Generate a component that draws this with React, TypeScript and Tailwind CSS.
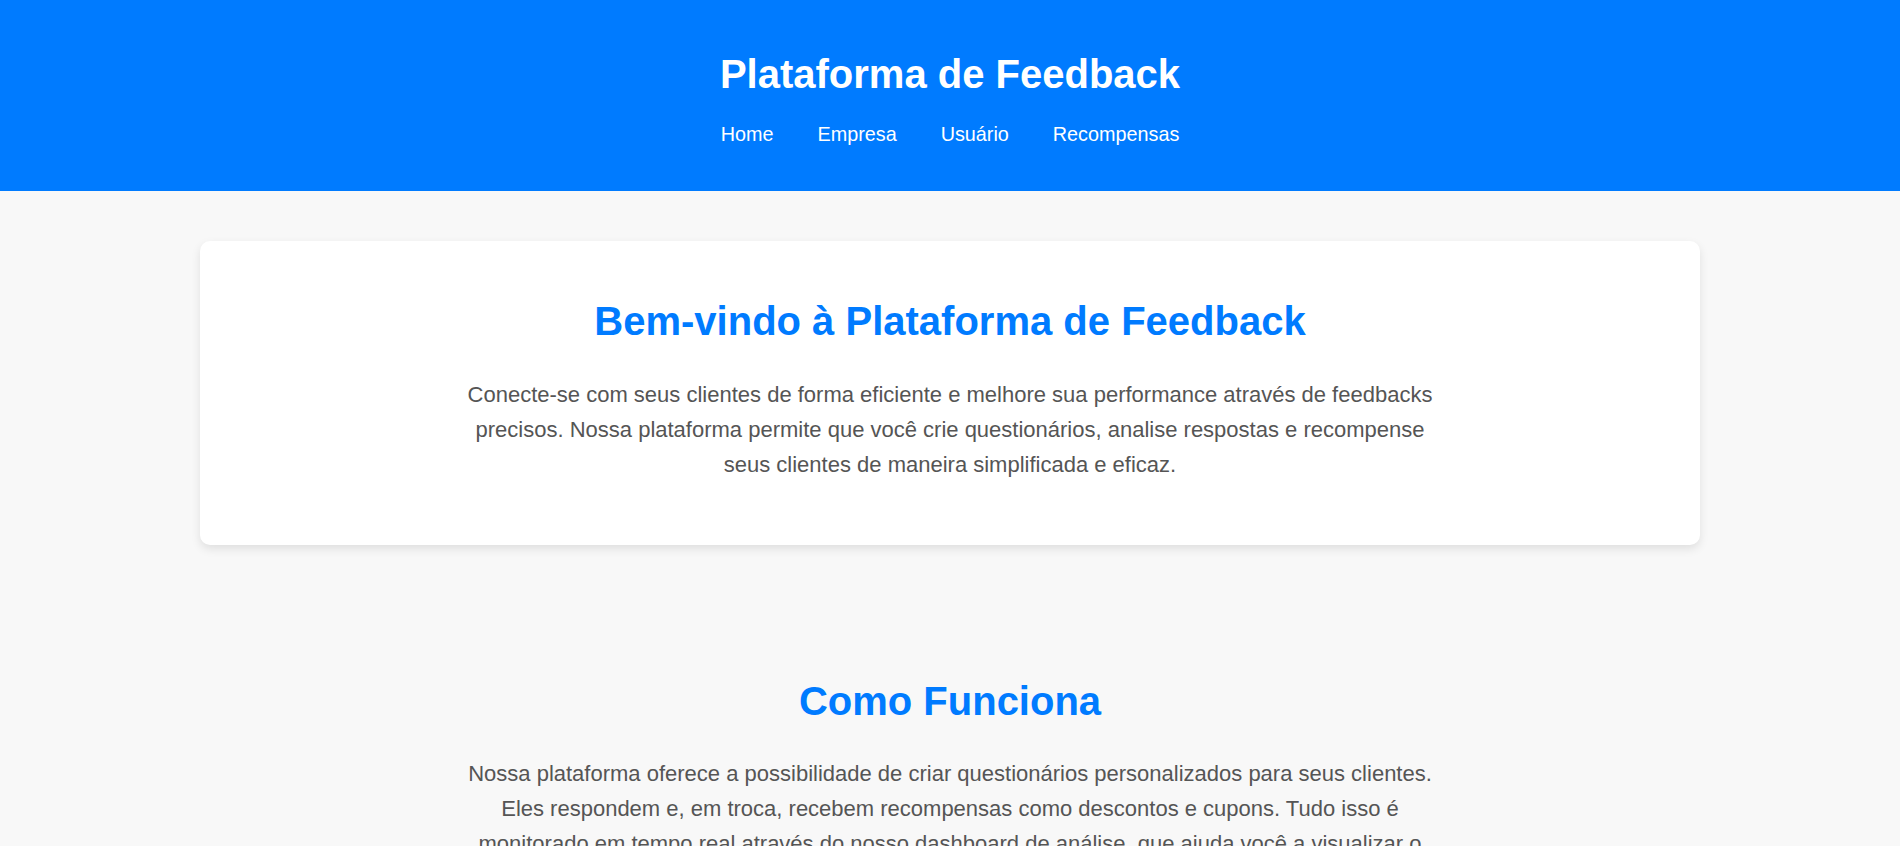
import React from "react";

const navItems = ["Home", "Empresa", "Usuário", "Recompensas"];

export default function App() {
  return (
    <div className="min-h-screen bg-[#f8f8f8] font-['Liberation_Sans',Arial,sans-serif]">
      <header className="bg-[#007bff] text-white text-center pt-[51px] pb-[46px]">
        <h1 className="text-[40px] leading-[46px] font-bold">
          Plataforma de Feedback
        </h1>
        <nav className="mt-[26px] flex justify-center gap-[44px] text-[19.8px] leading-[22px]">
          {navItems.map((item) => (
            <a key={item} href="#" className="text-white">
              {item}
            </a>
          ))}
        </nav>
      </header>

      <main className="flex flex-col items-center">
        <section className="mt-[50px] w-[1500px] bg-white rounded-[10px] shadow-[0_4px_10px_rgba(0,0,0,0.1)] pt-[57px] pb-[63px] text-center">
          <h2 className="text-[40px] leading-[46px] font-bold text-[#007bff]">
            Bem-vindo à Plataforma de Feedback
          </h2>
          <p className="mt-[33px] mx-auto max-w-[970px] text-[22px] leading-[35px] text-[#555]">
            Conecte-se com seus clientes de forma eficiente e melhore sua
            performance através de feedbacks precisos. Nossa plataforma permite
            que você crie questionários, analise respostas e recompense seus
            clientes de maneira simplificada e eficaz.
          </p>
        </section>

        <section className="mt-[133px] w-[1500px] text-center pb-10">
          <h2 className="text-[40px] leading-[46px] font-bold text-[#007bff]">
            Como Funciona
          </h2>
          <p className="mt-[32px] mx-auto max-w-[970px] text-[22px] leading-[35px] text-[#555]">
            Nossa plataforma oferece a possibilidade de criar questionários
            personalizados para seus clientes. Eles respondem e, em troca,
            recebem recompensas como descontos e cupons. Tudo isso é monitorado
            em tempo real através do nosso dashboard de análise, que ajuda você
            a visualizar o desempenho da sua empresa e tomar decisões mais
            assertivas.
          </p>
        </section>
      </main>
    </div>
  );
}
